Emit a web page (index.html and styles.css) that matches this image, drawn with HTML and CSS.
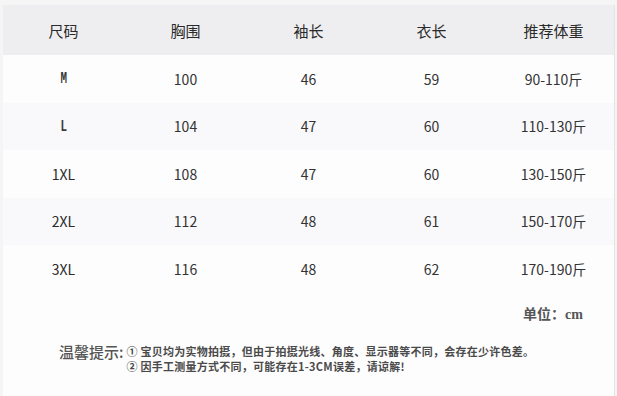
FILE: index.html
```html
<!DOCTYPE html>
<html lang="zh">
<head>
<meta charset="utf-8">
<link rel="stylesheet" href="styles.css">
</head>
<body>
<div class="sheet">
  <div class="row head">
    <div>尺码</div><div>胸围</div><div>袖长</div><div>衣长</div><div>推荐体重</div>
  </div>
  <div class="row odd">
    <div class="size"><span class="mono">M</span></div><div>100</div><div>46</div><div>59</div><div>90-110斤</div>
  </div>
  <div class="row even">
    <div class="size"><span class="mono">L</span></div><div>104</div><div>47</div><div>60</div><div>110-130斤</div>
  </div>
  <div class="row odd">
    <div class="size">1XL</div><div>108</div><div>47</div><div>60</div><div>130-150斤</div>
  </div>
  <div class="row even">
    <div class="size">2XL</div><div>112</div><div>48</div><div>61</div><div>150-170斤</div>
  </div>
  <div class="row odd">
    <div class="size">3XL</div><div>116</div><div>48</div><div>62</div><div>170-190斤</div>
  </div>
  <div class="unit">单位：cm</div>
  <div class="tips">
    <div class="tips-label">温馨提示:</div>
    <div class="tips-list">
      <div>① 宝贝均为实物拍摄，但由于拍摄光线、角度、显示器等不同，会存在少许色差。</div>
      <div>② 因手工测量方式不同，可能存在1-3CM误差，请谅解!</div>
    </div>
  </div>
</div>
</body>
</html>
```
FILE: styles.css
```css
html, body {
  margin: 0;
  padding: 0;
  background: #f5f5f6;
  overflow: hidden;
}
body {
  width: 617px;
  height: 396px;
  padding-top: 5px;
  box-sizing: border-box;
  font-family: "Noto Sans CJK SC", "Noto Sans", sans-serif;
  color: #333;
}
.sheet {
  margin-left: 3px;
  width: 611px;
  height: 391px;
  background: #fdfdfd;
  border-right: 1px solid #e4e4e6;
}
.row {
  display: grid;
  grid-template-columns: 121px 123px 123px 123px 121px;
  align-items: center;
  height: 47.5px;
  font-size: 14px;
}
.row > div {
  text-align: center;
  line-height: 1;
}
.head {
  height: 50px;
  background: #eeeef0;
  font-size: 15px;
  color: #2a2a2a;
}
.odd { background: #fdfdfe; }
.even { background: #f9f9fb; }
.size {
  font-size: 14px;
  color: #2b2b2b;
}
.mono {
  display: inline-block;
  font-family: "Liberation Mono", monospace;
  font-weight: bold;
  font-size: 16px;
  color: #3a3a3a;
  transform: scaleX(0.68);
}
.unit {
  height: 40px;
  display: flex;
  align-items: center;
  justify-content: flex-end;
  padding-right: 31px;
  font-family: "Liberation Serif", "Noto Sans CJK SC", serif;
  font-weight: bold;
  font-size: 14px;
  color: #555;
}
.tips {
  display: flex;
  align-items: flex-start;
  padding-left: 56px;
  padding-top: 10px;
  color: #555;
}
.tips-label {
  font-size: 15px;
  line-height: 18px;
  font-weight: 500;
  color: #555;
  margin-right: 3px;
}
.tips-list {
  font-size: 11px;
  line-height: 15px;
  font-weight: bold;
  color: #4a4a4a;
  padding-top: 1px;
  letter-spacing: 0.25px;
}
```
